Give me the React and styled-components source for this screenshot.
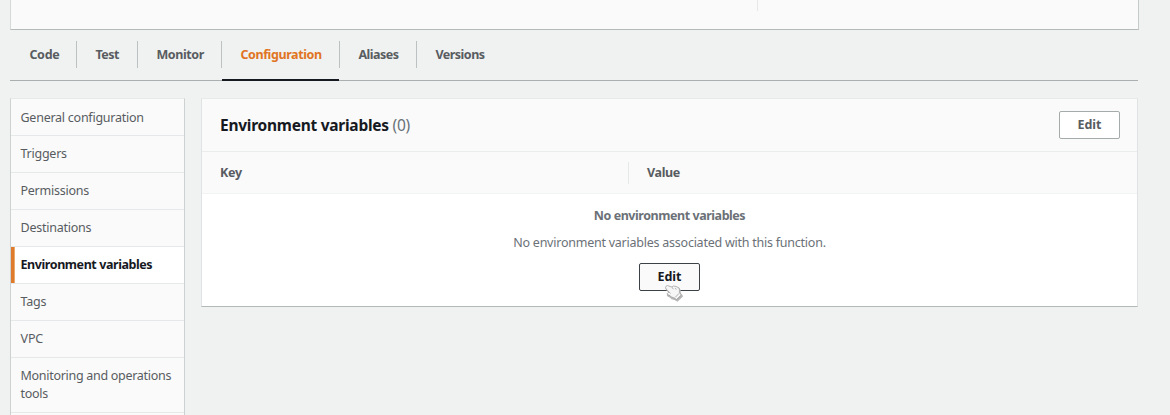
import React from "react";
import styled, { createGlobalStyle, css } from "styled-components";

const GlobalStyle = createGlobalStyle`
  * { box-sizing: border-box; }
  body {
    margin: 0;
    height: 415px;
    overflow: hidden;
    background: #f0f2f1;
    color: #585c61;
    font-family: "Noto Sans", "Open Sans", sans-serif;
    font-size: 12.5px;
    line-height: 18px;
  }
`;

const Page = styled.div`
  height: 415px;
  overflow: hidden;
  padding: 0 31px 0 10px;
`;

const Overview = styled.section`
  height: 30px;
  width: 1129px;
  display: flex;
  background: #fafafa;
  border: 1px solid #d5d9d9;
  border-top: 0;
  border-right-color: #c5caca;
  border-bottom-color: #b4baba;
`;

const OverviewColumn = styled.div`
  width: 747px;
  height: 11px;
  border-right: 1px solid #e6e8e8;
`;

const Tabs = styled.nav`
  height: 51px;
  width: 1128px;
  padding: 11px 0 0 1px;
  display: flex;
  border-bottom: 1px solid #aab0b0;
`;

const Tab = styled.a`
  position: relative;
  flex: none;
  width: ${(p) => p.$width}px;
  height: 27px;
  padding-left: ${(p) => p.$inset || 18.4}px;
  line-height: 27px;
  font-weight: 700;
  white-space: nowrap;
  letter-spacing: ${(p) => p.$spacing || 0}px;
  color: ${(p) => (p.$active ? "#e07423" : "#585c61")};
  border-right: ${(p) => (p.$last ? 0 : "1px solid #bcc1c1")};
  ${(p) =>
    p.$active &&
    css`
      &::after {
        content: "";
        position: absolute;
        left: 0;
        right: 0;
        bottom: -13px;
        height: 2px;
        background: #16191f;
      }
    `}
`;

const Columns = styled.div`
  display: flex;
  align-items: flex-start;
  gap: 16px;
  padding-top: 17px;
`;

const Sidebar = styled.aside`
  width: 175px;
  border: 1px solid #cdd1d1;
  border-top-color: #e7eaea;
`;

const SidebarItem = styled.a`
  display: block;
  height: ${(p) => (p.$tall ? 55 : 37)}px;
  padding: 9px 8px 0 9.5px;
  line-height: 18px;
  letter-spacing: ${(p) => p.$spacing || 0}px;
  background: ${(p) => (p.$active ? "#fff" : "#fafafa")};
  color: ${(p) => (p.$active ? "#16191f" : "#585c61")};
  font-weight: ${(p) => (p.$active ? 700 : 400)};
  border-bottom: 1px solid #e6e9e9;
  ${(p) => p.$active && "box-shadow: inset 3px 0 #dd7a2c, inset 4px 0 #eba96d;"}

  &:first-child {
    padding-top: 10px;
  }
`;

const Panel = styled.section`
  width: 937px;
  height: 209px;
  background: #fff;
  border: 1px solid #dfe3e3;
  border-top-color: #e7eaea;
  border-bottom-color: #b1b9b9;
`;

const PanelHeader = styled.header`
  height: 53px;
  padding: 0 17px 0 18px;
  display: flex;
  align-items: center;
  justify-content: space-between;
  background: #fafafa;
  border-bottom: 1px solid #ebeded;
`;

const Title = styled.h2`
  margin: 0;
  color: #16191f;
  font-size: 15.5px;
  line-height: 22px;
  letter-spacing: -0.26px;
`;

const Count = styled.span`
  color: #687078;
  font-weight: 400;
`;

const Button = styled.button`
  width: 61px;
  height: 28px;
  padding: 0;
  font: 700 12.5px/18px "Noto Sans", sans-serif;
  border-radius: 2px;
  color: ${(p) => (p.$hovered ? "#16191f" : "#585c61")};
  background: ${(p) => (p.$hovered ? "#fafafa" : "#fff")};
  border: 1px solid ${(p) => (p.$hovered ? "#3c4146" : "#a5abab")};
`;

const TableHead = styled.div`
  height: 42px;
  display: flex;
  align-items: center;
  background: #fafafa;
  border-bottom: 1px solid #f2f3f3;
  font-weight: 700;
`;

const HeadCell = styled.div`
  width: ${(p) => p.$width || "auto"};
  height: 22px;
  line-height: 22px;
  padding-left: 18px;
  letter-spacing: ${(p) => p.$spacing || 0}px;
  border-right: ${(p) => (p.$divided ? "1px solid #e6e9e9" : 0)};
`;

const Empty = styled.div`
  display: flex;
  flex-direction: column;
  align-items: center;
  padding-top: 13px;
  color: #6b7177;
`;

const EmptyTitle = styled.strong`
  letter-spacing: -0.45px;
`;

const EmptyText = styled.p`
  margin: 9px 0 11px;
  letter-spacing: -0.24px;
`;

const ButtonArea = styled.div`
  position: relative;
  display: flex;
`;

const Pointer = styled.svg`
  position: absolute;
  left: 25px;
  top: 21px;
`;

const HandPointer = () => (
  <Pointer width="20" height="19" viewBox="0 0 20 19" aria-hidden="true">
    <path
      d="M2 2.2 Q3.4.9 5.2 2.2 L8 3 Q9 1.4 11 2.2 L14.3 3.4 Q16 5 15.6 8.4 L17.8 11.2 L12.8 16.2 L9.8 14.4 Q6.8 14 5.8 12.2 L3.3 11 Q2.2 9.8 3.6 8.8 L4.8 8 L2.2 5 Q.8 3.4 2 2.2Z"
      fill="#b0b0b0"
      stroke="#b8b8b8"
      strokeWidth="1.2"
      transform="translate(.6 .9)"
    />
    <path
      d="M2 2.2 Q3.4.9 5.2 2.2 L8 3 Q9 1.4 11 2.2 L14.3 3.4 Q16 5 15.4 8.4 L17.2 10.9 L12.6 15.4 L9.8 13.8 Q7 13.4 6 11.6 L3.5 10.6 Q2.6 9.8 3.8 8.8 L5 8 L2.2 5 Q.8 3.4 2 2.2Z"
      fill="#f6f6f6"
      stroke="#9c9c9c"
      strokeWidth=".7"
    />
    <path
      d="M8 3.2 9.4 5.2M11.4 4 12.2 5.6M5 8 6.6 9.4M11.2 13.4 15 9.4"
      fill="none"
      stroke="#a0a0a0"
      strokeWidth=".8"
    />
  </Pointer>
);

const tabs = [
  { label: "Code", width: 66, spacing: -0.3 },
  { label: "Test", width: 61, spacing: -0.5 },
  { label: "Monitor", width: 84, spacing: -0.4 },
  { label: "Configuration", width: 118, spacing: -0.4, active: true },
  { label: "Aliases", width: 77, spacing: -0.5 },
  { label: "Versions", width: 90, spacing: -0.5, last: true },
];

const sections = [
  { label: "General configuration", spacing: -0.25 },
  { label: "Triggers", spacing: -0.25 },
  { label: "Permissions", spacing: -0.25 },
  { label: "Destinations", spacing: -0.25 },
  { label: "Environment variables", spacing: -0.42, active: true },
  { label: "Tags", spacing: -0.25 },
  { label: "VPC", spacing: -0.1 },
  { label: "Monitoring and operations tools", spacing: -0.29, tall: true },
  { label: "", spacing: 0 },
];

export default function App() {
  return (
    <>
      <GlobalStyle />
      <Page>
        <Overview>
          <OverviewColumn />
        </Overview>
        <Tabs>
          {tabs.map((t) => (
            <Tab key={t.label} $width={t.width} $spacing={t.spacing} $active={t.active} $last={t.last}>
              {t.label}
            </Tab>
          ))}
        </Tabs>
        <Columns>
          <Sidebar>
            {sections.map((s) => (
              <SidebarItem key={s.label} $spacing={s.spacing} $active={s.active} $tall={s.tall}>
                {s.label}
              </SidebarItem>
            ))}
          </Sidebar>
          <Panel>
            <PanelHeader>
              <Title>
                Environment variables <Count>(0)</Count>
              </Title>
              <Button>Edit</Button>
            </PanelHeader>
            <TableHead>
              <HeadCell $width="427px" $divided $spacing={-0.3}>Key</HeadCell>
              <HeadCell $spacing={-0.35}>Value</HeadCell>
            </TableHead>
            <Empty>
              <EmptyTitle>No environment variables</EmptyTitle>
              <EmptyText>No environment variables associated with this function.</EmptyText>
              <ButtonArea>
                <Button $hovered>Edit</Button>
                <HandPointer />
              </ButtonArea>
            </Empty>
          </Panel>
        </Columns>
      </Page>
    </>
  );
}
